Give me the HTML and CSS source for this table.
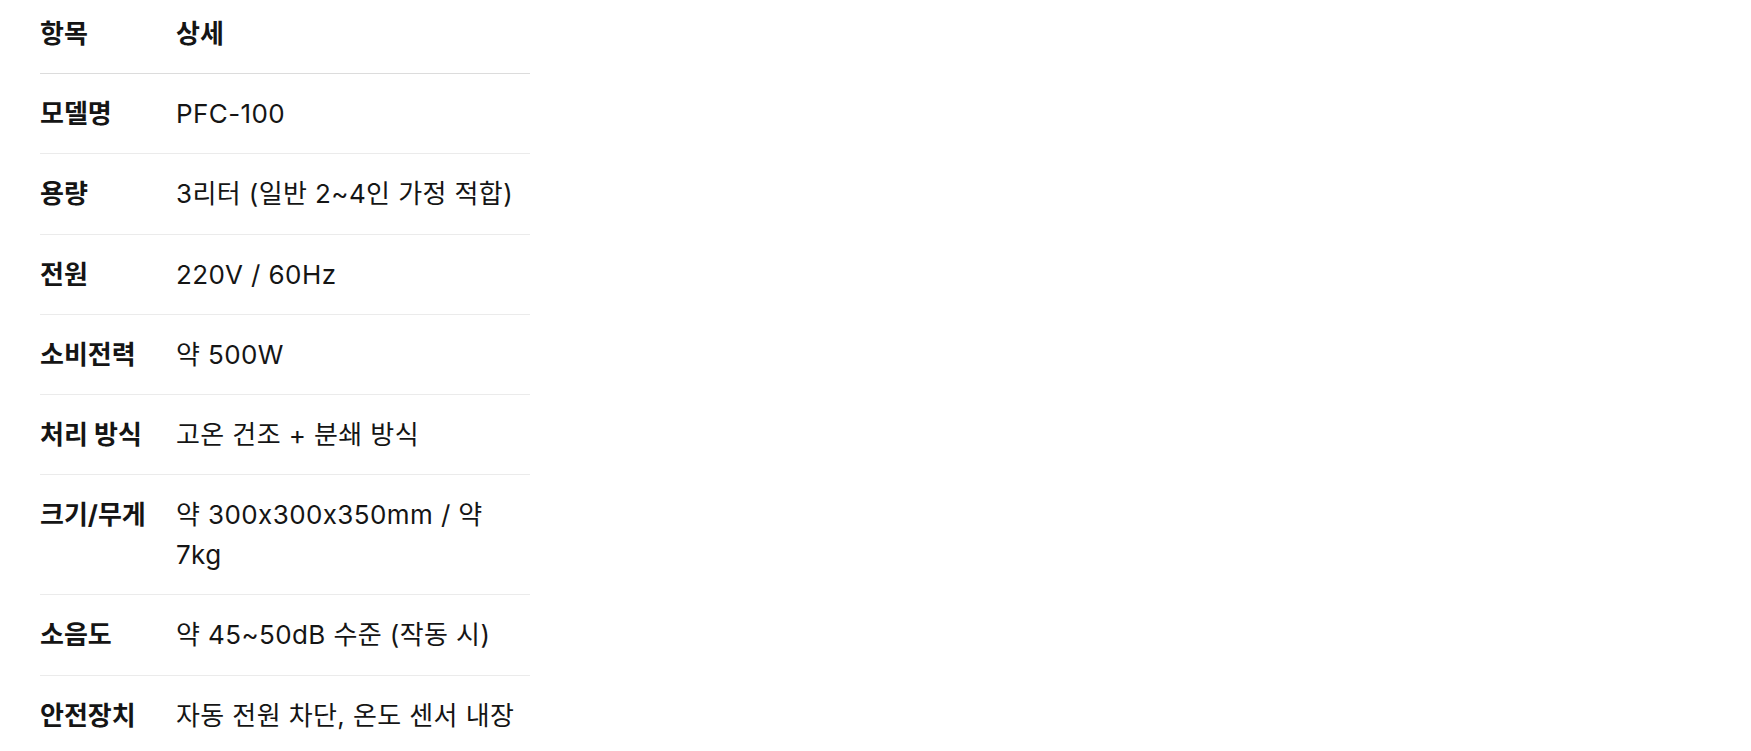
FILE: index.html
```html
<!DOCTYPE html>
<html lang="ko">
<head>
<meta charset="utf-8">
<link rel="stylesheet" href="styles.css">
<title>사양</title>
</head>
<body>
<div class="wrap">
<table class="spec">
  <colgroup><col class="c1"><col class="c2"></colgroup>
  <thead>
    <tr><th class="key">항목</th><th class="val">상세</th></tr>
  </thead>
  <tbody>
    <tr><th class="key">모델명</th><td class="val">PFC-100</td></tr>
    <tr><th class="key">용량</th><td class="val">3리터 (일반 2~4인 가정 적합)</td></tr>
    <tr><th class="key">전원</th><td class="val">220V / 60Hz</td></tr>
    <tr><th class="key">소비전력</th><td class="val">약 500W</td></tr>
    <tr><th class="key">처리 방식</th><td class="val">고온 건조 + 분쇄 방식</td></tr>
    <tr><th class="key">크기/무게</th><td class="val">약 300x300x350mm / 약 7kg</td></tr>
    <tr><th class="key">소음도</th><td class="val">약 45~50dB 수준 (작동 시)</td></tr>
    <tr><th class="key">안전장치</th><td class="val">자동 전원 차단, 온도 센서 내장</td></tr>
  </tbody>
</table>
</div>
</body>
</html>
```

FILE: styles.css
```css
html, body {
  margin: 0;
  padding: 0;
  background: #ffffff;
}
.wrap {
  padding-left: 40px;
}
.spec {
  width: 490px;
  table-layout: fixed;
  border-collapse: collapse;
  font-family: "Inter", "Noto Sans CJK KR", sans-serif;
  font-feature-settings: "calt" 0;
  font-size: 26px;
  line-height: 40px;
  color: #151515;
}
.c1 { width: 120px; }
.spec th, .spec td {
  text-align: left;
  vertical-align: top;
  padding: 20px 8px 19.2px 16px;
  border-bottom: 1px solid #ebebeb;
  word-break: keep-all;
}
.spec .key {
  font-weight: 700;
  padding-left: 0;
  padding-right: 0;
  white-space: nowrap;
}
.spec .val {
  letter-spacing: 0.4px;
}
.spec thead .val {
  font-weight: 700;
  letter-spacing: 0;
}
.spec tbody .val {
  font-weight: 400;
}
.spec thead th {
  padding-top: 14px;
  border-bottom-color: #dcdcdc;
}
```
